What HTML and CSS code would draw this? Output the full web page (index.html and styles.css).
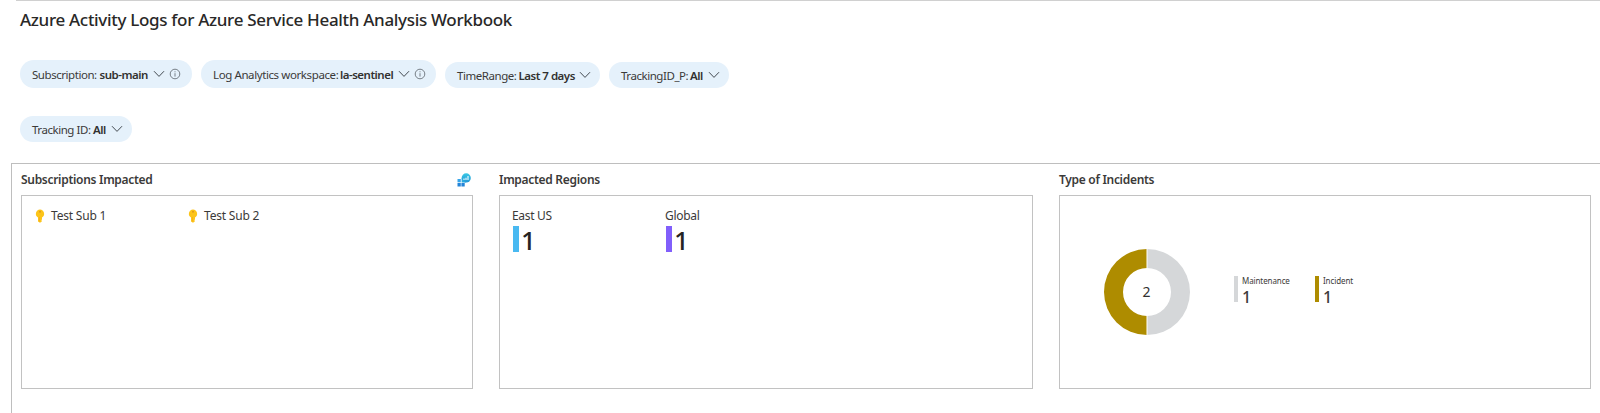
FILE: index.html
```html
<!DOCTYPE html>
<html lang="en">
<head>
<meta charset="utf-8">
<title>Azure Service Health Analysis Workbook</title>
<link rel="stylesheet" href="styles.css">
</head>
<body>
<svg class="defs" width="0" height="0">
  <symbol id="chev" viewBox="0 0 12 8"><path d="M1 1.2 6 6.4 11 1.2" fill="none" stroke="#444b52" stroke-width="1"/></symbol>
  <symbol id="info" viewBox="0 0 12 12"><circle cx="6" cy="6" r="4.8" fill="none" stroke="#777f87" stroke-width="1"/><path d="M6 5.2V8.6M6 3.3V4.3" stroke="#777f87" stroke-width="1"/></symbol>
  <symbol id="key" viewBox="0 0 10 14"><path d="M5 .4A4.3 4.3 0 0 0 3 8.400V12.400L5 13.800 7 12.200 6.400 11.200 7 10.200V8.400A4.300 4.300 0 0 0 5 .4Z" fill="#fcc419"/><circle cx="5" cy="2.700" r="1" fill="#e09a1a"/><path d="M4.500 8V12.500" stroke="#f5a81c" stroke-width=".7"/></symbol>
</svg>
<header class="top"><h1>Azure Activity Logs for Azure Service Health Analysis Workbook</h1></header>
<nav class="filters">
  <div class="pill tall w1"><span class="k k1">Subscription:</span><b class="b1">sub-main</b><svg class="chev"><use href="#chev"/></svg><svg class="info"><use href="#info"/></svg></div>
  <div class="pill tall w2"><span class="k k2">Log Analytics workspace:</span><b class="b2">la-sentinel</b><svg class="chev"><use href="#chev"/></svg><svg class="info"><use href="#info"/></svg></div>
  <div class="pill w3"><span class="k k3">TimeRange:</span><b class="b3">Last 7 days</b><svg class="chev"><use href="#chev"/></svg></div>
  <div class="pill w4"><span class="k k4">TrackingID_P:</span><b class="b4">All</b><svg class="chev"><use href="#chev"/></svg></div>
</nav>
<nav class="filters second">
  <div class="pill w5"><span class="k k5">Tracking ID:</span><b class="b4">All</b><svg class="chev"><use href="#chev"/></svg></div>
</nav>
<main class="board">
  <section class="subs">
    <h2><span>Subscriptions Impacted</span>
      <svg class="logs" viewBox="0 0 14 14"><defs><linearGradient id="g" x1="0" y1="0" x2="0" y2="1"><stop offset="0" stop-color="#38c8e4"/><stop offset="1" stop-color="#2596d6"/></linearGradient></defs><path d="M.5 6h3.300v3.300H.5z" fill="#36a5ea"/><path d="M.5 10h3.300v3.500H.5zM4.400 10h3.300v3.500H4.400z" fill="#2384d8"/><circle cx="9.200" cy="4.900" r="4.600" fill="url(#g)"/><path d="M4.600 5v4.500h4.600z" fill="#2baade"/><path d="M7 7V5.500M9 7V4.700M11 7V3" stroke="#e5faff" stroke-width="1.200"/></svg>
    </h2>
    <div class="panel tiles">
      <div class="tile"><svg class="key"><use href="#key"/></svg><span>Test Sub 1</span></div>
      <div class="tile"><svg class="key"><use href="#key"/></svg><span>Test Sub 2</span></div>
    </div>
  </section>
  <section class="regions">
    <h2><span>Impacted Regions</span></h2>
    <div class="panel tiles">
      <div class="region"><span class="name">East US</span><div class="num">1</div></div>
      <div class="region"><span class="name">Global</span><div class="num violet">1</div></div>
    </div>
  </section>
  <section class="types">
    <h2><span>Type of Incidents</span></h2>
    <div class="panel chart">
      <svg class="donut" viewBox="0 0 88 88"><path d="M44 1a43 43 0 0 1 0 86V68a24 24 0 0 0 0-48z" fill="#d5d7d9"/><path d="M44 1a43 43 0 0 0 0 86V68a24 24 0 0 1 0-48z" fill="#ae8c00"/><path d="M44 0v20M44 68v20" stroke="#fff"/><text x="43.500" y="49" text-anchor="middle">2</text></svg>
      <div class="legend first"><span>Maintenance</span><strong>1</strong></div>
      <div class="legend gold"><span>Incident</span><strong>1</strong></div>
    </div>
  </section>
</main>
</body>
</html>
```
FILE: styles.css
```css
* { box-sizing: border-box; }
html, body { height: 100%; }
body { margin: 0; background: #fff; color: #3b3a39; overflow: hidden; font-family: "Noto Sans", "Open Sans", sans-serif; display: flex; flex-direction: column; }
.defs { position: absolute; }
.top { height: 60px; flex: none; margin-left: 16px; padding: 7px 0 0 4px; border-top: 1px solid #d0d0d0; }
h1 { margin: 0; font-size: 17px; line-height: 24px; font-weight: 500; letter-spacing: -.315px; color: #292827; white-space: nowrap; }
.filters { display: flex; align-items: flex-end; height: 28px; flex: none; padding-left: 20px; }
.second { margin-top: 26px; margin-bottom: 21px; }
.pill { display: flex; align-items: center; height: 26px; border-radius: 14px; padding-left: 12px; background: #e5f1fb; font-size: 11.5px; white-space: nowrap; flex: none; }
.pill > * { flex: none; }
.tall { height: 28px; }
.w1 { width: 172px; margin-right: 9px; }
.w2 { width: 235px; margin-right: 9px; }
.w3 { width: 155px; margin-right: 9px; }
.w4 { width: 120px; }
.w5 { width: 112px; }
.k { letter-spacing: -.45px; }
.k1 { width: 67.5px; } .k2 { width: 127px; letter-spacing: -.4px; } .k3 { width: 61.5px; } .k4 { width: 69px; } .k5 { width: 61px; }
.pill b { font-weight: 600; letter-spacing: -.5px; color: #323130; }
.b1 { width: 53.5px; } .b2 { width: 57.5px; } .b3 { width: 60.5px; } .b4 { width: 18px; }
.chev { width: 12px; height: 8px; }
.info { width: 12px; height: 12px; margin-left: 4px; }
.board { flex: 1; margin-left: 11px; padding-left: 9px; border-top: 1px solid #bebebe; border-left: 1px solid #bebebe; display: flex; gap: 26px; }
.subs { width: 452px; } .regions { width: 534px; } .types { width: 532px; }
h2 { display: flex; justify-content: space-between; margin: 0; height: 31px; padding: 7px 2px 0 0; font-size: 12px; line-height: 17px; font-weight: 600; letter-spacing: -.3px; white-space: nowrap; }
.logs { width: 14px; height: 14px; margin-top: 2px; }
.panel { height: 194px; border: 1px solid #c2c2c2; }
.tiles { display: flex; padding: 11px 0 0 12px; font-size: 12px; line-height: 17px; }
.tile { width: 153px; display: flex; align-items: center; height: 17px; padding-left: 1px; letter-spacing: -.2px; }
.key { width: 10px; height: 14px; margin-right: 6px; }
.region { width: 153px; }
.name { display: block; letter-spacing: -.3px; }
.num { margin: 2px 0 0 1px; height: 26px; border-left: 6px solid #49b9f1; padding-left: 2px; font-size: 26px; line-height: 29px; font-weight: 500; color: #252423; }
.violet { border-color: #815ffb; }
.chart { display: flex; align-items: center; padding-left: 43px; }
.donut { width: 88px; height: 88px; flex: none; }
.donut text { font-size: 14px; fill: #323130; }
.legend { width: 77px; height: 26px; border-left: 4px solid #d5d7d9; margin-top: -6px; padding-left: 4px; margin-right: 4px; }
.first { margin-left: 43px; }
.gold { border-color: #ae8c00; }
.legend span { display: block; font-size: 8px; line-height: 10px; letter-spacing: -.1px; }
.legend strong { display: block; font-size: 16px; line-height: 22px; font-weight: 500; }
```
